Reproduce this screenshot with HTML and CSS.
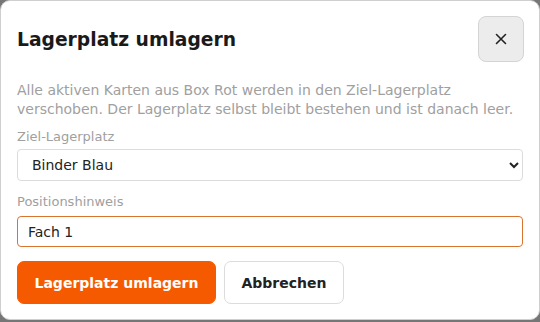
FILE: index.html
```html
<!DOCTYPE html>
<html lang="de">

<head>
  <meta charset="UTF-8" />
  <meta name="viewport" content="width=device-width, initial-scale=1.0" />
  <title>Lagerplatz umlagern</title>
  <link rel="stylesheet" href="styles.css">
</head>

<body>
  <div class="dialog">
    <div class="dialog-header">
      <h3>Lagerplatz umlagern</h3>
      <button class="close" aria-label="Schließen">
        <svg width="12" height="12" viewBox="0 0 12 12">
          <path d="M1.5 1.5 L10.5 10.5 M10.5 1.5 L1.5 10.5" stroke="#222" stroke-width="1.6" stroke-linecap="round" fill="none" />
        </svg>
      </button>
    </div>
    <p class="hint">Alle aktiven Karten aus Box Rot werden in den Ziel-Lagerplatz verschoben. Der Lagerplatz selbst bleibt bestehen und ist danach leer.</p>
    <div class="field">
      <label for="target">Ziel-Lagerplatz</label>
      <select id="target">
        <option>Binder Blau</option>
        <option>Box Grün</option>
      </select>
    </div>
    <div class="field field-second">
      <label for="pos">Positionshinweis</label>
      <input id="pos" type="text" value="Fach 1" />
    </div>
    <div class="actions">
      <button class="btn btn-primary">Lagerplatz umlagern</button>
      <button class="btn btn-secondary">Abbrechen</button>
    </div>
  </div>
</body>

</html>
```

FILE: styles.css
```css
* {
  box-sizing: border-box;
}

body {
  margin: 0;
  background: #767676;
  font-family: "DejaVu Sans", "Liberation Sans", sans-serif;
}

.dialog {
  width: 540px;
  height: 320px;
  background: #fff;
  border: 1px solid #cfcfcf;
  border-radius: 10px;
  padding: 15px 16px;
}

.dialog-header {
  display: flex;
  align-items: center;
  justify-content: space-between;
  height: 46px;
}

.dialog-header h3 {
  margin: 0;
  font-size: 18.72px;
  font-weight: bold;
  color: #1a1a1a;
}

.close {
  width: 46px;
  height: 46px;
  border: 1px solid #d4d4d4;
  border-radius: 8px;
  background: #ececec;
  display: flex;
  align-items: center;
  justify-content: center;
  padding: 0;
  margin-right: -1px;
  cursor: pointer;
}

.hint {
  margin: 19px 0 0 0;
  font-size: 14px;
  line-height: 19px;
  color: #a0a0a0;
}

.field {
  margin-top: 10px;
}

.field-second {
  margin-top: 13px;
}

.field label {
  display: block;
  font-size: 13px;
  line-height: 16px;
  color: #a0a0a0;
  margin-bottom: 4px;
}

.field-second label {
  margin-bottom: 6px;
}

.field select,
.field input {
  display: block;
  width: 100%;
  font-family: inherit;
  font-size: 14px;
  color: #222;
  background: #fff;
  border-radius: 4px;
  padding: 0 10px;
}

.field select {
  height: 32px;
  border: 1px solid #dcdcdc;
}

.field input {
  height: 31px;
  border: 1px solid #d9742f;
  outline: none;
}

.actions {
  display: flex;
  gap: 8px;
  margin-top: 14px;
}

.btn {
  height: 43px;
  padding: 0 16.5px;
  font-family: inherit;
  font-size: 14px;
  font-weight: bold;
  border-radius: 7px;
  cursor: pointer;
}

.btn-primary {
  background: #f55a00;
  color: #fff;
  border: 1px solid #f55a00;
}

.btn-secondary {
  background: #fff;
  color: #222;
  border: 1px solid #dcdcdc;
}
```
